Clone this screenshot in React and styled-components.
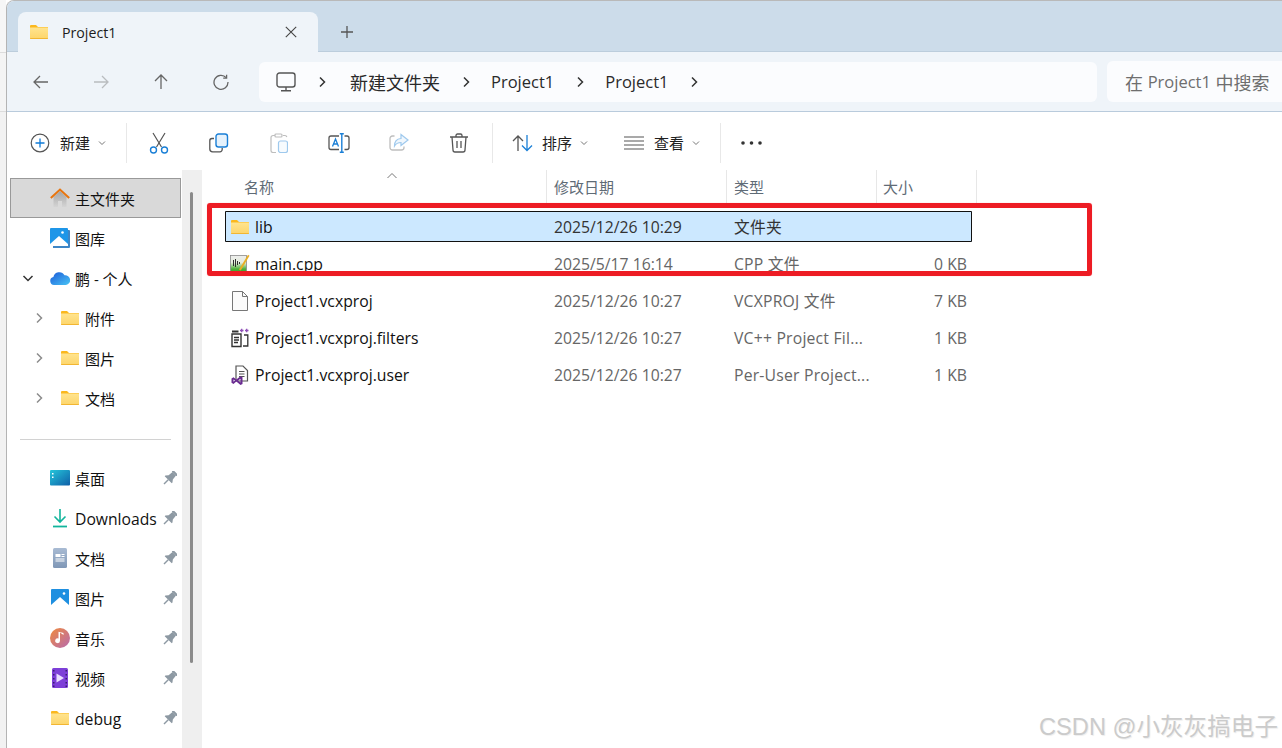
import React, { useId } from 'react';
import styled, { createGlobalStyle } from 'styled-components';

const GlobalStyle = createGlobalStyle`
  html, body {
    margin: 0;
    padding: 0;
    background: #fff;
    overflow: hidden;
  }
  body {
    font-family: "Open Sans", "Noto Sans CJK SC", sans-serif;
    color: #1a1a1a;
  }
`;

const Page = styled.div`
  position: relative;
  display: flex;
  width: 1282px;
  height: 748px;
  overflow: hidden;
  background: #fff;
`;

const BackStrip = styled.div`
  width: 6px;
  flex: none;
  background: linear-gradient(#f6f6f6 0 52px, #dcdcdc 52px 53px, #f4f4f4 53px 111px, #dcdcdc 111px 112px, #f2f2f2 112px);
`;

const Win = styled.div`
  flex: 1;
  min-width: 0;
  display: flex;
  flex-direction: column;
  border-top: 1px solid #b9b9b9;
  border-left: 1px solid #b4b4b4;
  border-top-left-radius: 8px;
  overflow: hidden;
  background: #fff;
`;

const TabStrip = styled.div`
  height: 51px;
  flex: none;
  display: flex;
  align-items: flex-end;
  padding-left: 11px;
  background: #ccdcea;
  box-sizing: border-box;
  border-bottom: 1px solid #bccddc;
`;

const Tab = styled.div`
  width: 300px;
  height: 40px;
  margin-bottom: -1px;
  display: flex;
  align-items: center;
  padding: 0 21px 0 12px;
  box-sizing: border-box;
  background: #eff4f9;
  border-radius: 8px 8px 0 0;
`;

const TabTitle = styled.span`
  flex: 1;
  margin-left: 14px;
  font-size: 14.2px;
  color: #1c1c1c;
`;

const PlusButton = styled.div`
  width: 20px;
  height: 20px;
  margin: 0 0 9px 19px;
  color: #555;
`;

const NavBar = styled.div`
  height: 60px;
  flex: none;
  display: flex;
  align-items: center;
  background: #eff4f9;
  border-bottom: 1px solid #b9cbdc;
  box-sizing: border-box;
`;

const NavButton = styled.div`
  width: 60px;
  height: 40px;
  flex: none;
  display: flex;
  align-items: center;
  justify-content: center;
  color: ${p => (p.$off ? '#b9bcbf' : '#666')};
`;

const NavButtons = styled.div`
  display: flex;
  margin-left: 4px;
  margin-right: 8px;
`;

const AddressBox = styled.div`
  width: 838px;
  height: 40px;
  flex: none;
  display: flex;
  align-items: center;
  padding-left: 17px;
  box-sizing: border-box;
  background: #fbfcfe;
  border-radius: 6px;
  font-size: 18px;
  color: #2a2a2a;
`;

const Crumb = styled.span`
  white-space: nowrap;
  font-size: ${p => (p.$latin ? '16.5px' : '18px')};
`;

const CrumbArrow = styled.span`
  width: 51px;
  flex: none;
  display: flex;
  justify-content: center;
  margin: ${p => (p.$first ? '0 3px 0 0' : '0')};
  color: #333;
`;

const SearchBox = styled.div`
  width: 175px;
  height: 41px;
  flex: none;
  margin-left: 10px;
  display: flex;
  align-items: center;
  padding-left: 18px;
  box-sizing: border-box;
  background: #fbfcfe;
  border-radius: 6px 0 0 6px;
  font-size: 18px;
  color: #6e6e6e;
  white-space: pre;
`;

const SearchTerm = styled.span`
  font-size: 16.5px;
`;

const Toolbar = styled.div`
  height: 58px;
  flex: none;
  display: flex;
  align-items: center;
  padding: 3px 0 0 23px;
  box-sizing: border-box;
  background: #fff;
`;

const ToolLabelButton = styled.div`
  display: flex;
  align-items: center;
  width: ${p => p.$w}px;
  flex: none;
  font-size: 15px;
  color: #1f1f1f;
  white-space: nowrap;
`;

const ToolLabel = styled.span`
  margin: 0 8px 0 ${p => p.$gap}px;
`;

const ToolIcon = styled.div`
  width: 60px;
  flex: none;
  display: flex;
  justify-content: center;
  opacity: ${p => (p.$off ? 0.42 : 1)};
`;

const ToolSep = styled.div`
  width: 1px;
  height: 40px;
  flex: none;
  margin: 0 ${p => p.$right}px 0 ${p => p.$left}px;
  background: #e8e8e8;
`;

const Body = styled.div`
  flex: 1;
  min-height: 0;
  display: flex;
`;

const Side = styled.div`
  width: 175px;
  flex: none;
  padding: 8px 0 0 3px;
  box-sizing: border-box;
  background: #fff;
`;

const SideRow = styled.div`
  height: 40px;
  margin-right: 1px;
  box-sizing: border-box;
  display: flex;
  align-items: center;
  font-size: 15px;
  color: #111;
  white-space: nowrap;
  ${p => p.$active && `
    background: #d9d9d9;
    border: 1px solid #999;
  `}
`;

const SideChevron = styled.div`
  width: ${p => (p.$sub ? 28 : 20)}px;
  margin-left: ${p => (p.$sub ? 23 : 12)}px;
  flex: none;
  color: ${p => (p.$open ? '#333' : '#8c8c8c')};
  display: flex;
`;

const SideIcon = styled.div`
  width: 20px;
  height: 20px;
  flex: none;
  margin: 0 5px 0 ${p => p.$indent}px;
  display: flex;
  align-items: center;
  justify-content: center;
`;

const SideText = styled.span`
  flex: 1;
  font-size: ${p => (p.$latin ? '15.7px' : '15px')};
  padding-top: ${p => (p.$latin ? '2px' : '0')};
`;

const PinSlot = styled.div`
  width: 14px;
  flex: none;
  margin-right: 4px;
  display: flex;
  justify-content: center;
`;

const SideRule = styled.div`
  height: 1px;
  margin: 21px 11px 18px 10px;
  background: #d2d2d2;
`;

const ScrollGutter = styled.div`
  width: 20px;
  flex: none;
  padding: 22px 0 0 8px;
  box-sizing: border-box;
  background: #efefef;
`;

const ScrollThumb = styled.div`
  width: 3px;
  height: 471px;
  border-radius: 2px;
  background: #8a8a8a;
`;

const Main = styled.div`
  flex: 1;
  min-width: 0;
  background: #fff;
  position: relative;
`;

const HeaderRow = styled.div`
  height: 33px;
  display: grid;
  grid-template-columns: 345px 180px 150px 100px;
  box-sizing: border-box;
  font-size: 15px;
  color: #5f6b76;
`;

const HeaderCell = styled.div`
  position: relative;
  display: flex;
  align-items: center;
  padding-left: ${p => p.$pad}px;
  border-right: 1px solid #e7e7e7;
`;

const SortMark = styled.div`
  position: absolute;
  left: 184px;
  top: 0;
  color: #777;
  display: flex;
`;

const FileList = styled.div`
  padding: 8px 0 0 23px;
`;

const FileRow = styled.div`
  width: 747px;
  height: 31px;
  margin-bottom: 6px;
  display: grid;
  grid-template-columns: 320px 180px 150px 97px;
  align-items: center;
  box-sizing: border-box;
  font-size: 15.75px;
  color: #666;
  white-space: nowrap;
  ${p => p.$selected && `
    background: #cce8ff;
    box-shadow: inset 0 0 0 1px #111;
    border-radius: 1px;
    color: #333;
  `}
`;

const NameCell = styled.div`
  display: flex;
  align-items: center;
  color: #111;
  padding-left: 5px;
`;

const FileIcon = styled.div`
  width: 20px;
  height: 20px;
  flex: none;
  margin-right: 5px;
  display: flex;
  align-items: center;
  justify-content: center;
`;

const DateCell = styled.div`
  padding-left: 9px;
`;

const TypeCell = styled.div`
  padding-left: 9px;
  letter-spacing: 0.2px;
`;

const SizeCell = styled.div`
  text-align: right;
  padding-right: 5px;
`;

const RedMark = styled.div`
  position: absolute;
  left: 5px;
  top: 33px;
  width: 885px;
  height: 73px;
  box-sizing: border-box;
  border: 5px solid #ed1c24;
  border-radius: 3px;
  box-shadow: 0 0 1px rgba(237, 28, 36, 0.4);
  pointer-events: none;
`;

const Watermark = styled.div`
  position: absolute;
  right: 4px;
  bottom: 6px;
  font-family: "Liberation Sans", "Noto Sans CJK SC", sans-serif;
  font-size: 23.6px;
  color: #cbcbcb;
  text-shadow: 1px 1px 1px #eeeeee;
  white-space: nowrap;
  pointer-events: none;
`;

function Folder({ size = 18 }) {
  const id = useId();
  const h = Math.round(size * 0.78);
  return (
    <svg width={size} height={h} viewBox="0 0 18 14">
      <defs>
        <linearGradient id={id} x1="0" y1="0" x2="0" y2="1">
          <stop offset="0" stopColor="#ffe48f" />
          <stop offset="1" stopColor="#fdd56a" />
        </linearGradient>
      </defs>
      <path d="M0 1a1 1 0 0 1 1-1h5l2 2h10v3H0z" fill="#fbb81e" />
      <path d="M0 2.500h18V13a1 1 0 0 1-1 1H1a1 1 0 0 1-1-1z" fill={`url(#${id})`} />
      <path d="M0 13h18v.2a.8.8 0 0 1-.8.8H.8a.8.8 0 0 1-.8-.8z" fill="#f2b632" />
    </svg>
  );
}

function Home() {
  const id = useId();
  return (
    <svg width="20" height="20" viewBox="0 0 20 20">
      <defs>
        <linearGradient id={id} x1="0" y1="0" x2="0" y2="1">
          <stop offset="0" stopColor="#a4a4a4" />
          <stop offset="1" stopColor="#d4d4d4" />
        </linearGradient>
      </defs>
      <path d="M3.500 9 10 3l6.500 6v10h-4.500v-6H8v6H3.500z" fill={`url(#${id})`} />
      <path d="M.8 10 10 1.500 19.200 10" fill="none" stroke="#e8750e" strokeWidth="2" />
    </svg>
  );
}

function Gallery() {
  return (
    <svg width="20" height="20" viewBox="0 0 20 20">
      <path d="M3 2h16a1 1 0 0 1 1 1v16a1 1 0 0 1-1 1H3z" fill="#3e86c6" />
      <rect x="0" y="0" width="18" height="18" rx="1" fill="#1e96e8" />
      <path d="M0 16 9 8l9 8v2H0z" fill="#fff" />
      <circle cx="12.500" cy="4.500" r="1.300" fill="#fff" />
    </svg>
  );
}

function Cloud() {
  const id = useId();
  return (
    <svg width="20" height="14" viewBox="0 0 20 14">
      <defs>
        <linearGradient id={id} x1="0" y1="0" x2="1" y2="1">
          <stop offset="0" stopColor="#1b59d8" />
          <stop offset="1" stopColor="#49c5f5" />
        </linearGradient>
      </defs>
      <path d="M4 14a4 4 0 0 1-.6-7.900A6 6 0 0 1 14.500 4.300 4.900 4.900 0 0 1 16 14z" fill={`url(#${id})`} />
    </svg>
  );
}

function Desktop() {
  const id = useId();
  return (
    <svg width="20" height="16" viewBox="0 0 20 16">
      <defs>
        <linearGradient id={id} x1="0" y1="0" x2="1" y2="1">
          <stop offset="0" stopColor="#25c6da" />
          <stop offset="1" stopColor="#0f5fa8" />
        </linearGradient>
      </defs>
      <rect width="20" height="15.500" rx="1" fill={`url(#${id})`} />
      <path d="M2 3h1.500v1.500H2zM2 6.500h1.500V8H2z" fill="#fff" />
    </svg>
  );
}

function DownloadArrow() {
  return (
    <svg width="16" height="20" viewBox="0 0 16 20" fill="none" stroke="#12b59c" strokeWidth="1.600">
      <path d="M8 1v13M2.500 8.500 8 14l5.500-5.500" />
      <path d="M1 18.500h14" strokeWidth="1.800" />
    </svg>
  );
}

function DocIcon() {
  const id = useId();
  return (
    <svg width="14" height="20" viewBox="0 0 14 20">
      <defs>
        <linearGradient id={id} x1="0" y1="0" x2="0" y2="1">
          <stop offset="0" stopColor="#a9bbd3" />
          <stop offset="1" stopColor="#7f97b6" />
        </linearGradient>
      </defs>
      <rect width="14" height="20" rx="1.500" fill={`url(#${id})`} />
      <path d="M2.500 6h5v3h-5zM8.500 6h3v1h-3zM8.500 8h3v1h-3zM2.500 10.500h9v1h-9zM2.500 12.500h9v1h-9z" fill="#fff" />
    </svg>
  );
}

function PictureIcon() {
  return (
    <svg width="18" height="18" viewBox="0 0 18 18">
      <rect width="18" height="18" rx="1" fill="#1e8fe0" />
      <path d="M0 16 9 8l9 8v2H0z" fill="#fff" />
      <circle cx="13" cy="4.500" r="1.300" fill="#fff" />
    </svg>
  );
}

function MusicIcon() {
  const id = useId();
  return (
    <svg width="20" height="20" viewBox="0 0 20 20">
      <defs>
        <linearGradient id={id} x1="0" y1="0" x2="1" y2="1">
          <stop offset="0" stopColor="#f08a3c" />
          <stop offset="1" stopColor="#b76bb0" />
        </linearGradient>
      </defs>
      <circle cx="10" cy="10" r="10" fill={`url(#${id})`} />
      <path d="M10 4.500v8.200a2.400 2.400 0 1 1-1.500-2.200V3.800l5 1.200v2z" fill="#fff" />
    </svg>
  );
}

function VideoIcon() {
  return (
    <svg width="16" height="20" viewBox="0 0 16 20">
      <rect width="16" height="20" rx="1.500" fill="#7d3fd8" />
      <path d="M1 2h1.500v1.500H1zM1 6h1.500v1.500H1zM1 10h1.500v1.500H1zM1 14h1.500v1.500H1zM1 17.500h1.500V19H1zM13.500 2H15v1.500h-1.500zM13.500 6H15v1.500h-1.500zM13.500 10H15v1.500h-1.500zM13.500 14H15v1.500h-1.500zM13.500 17.500H15V19h-1.500z" fill="#3a1c70" />
      <path d="M4.500 5.500 12 10l-7.500 4.500z" fill="#e9ddff" />
    </svg>
  );
}

function Pin() {
  return (
    <svg width="14" height="14" viewBox="0 0 14 14" fill="#8d99a3">
      <g transform="rotate(45 7 7)">
        <rect x="3.400" y="-1" width="7.200" height="2" rx=".6" />
        <path d="M4.500 1h5l.5 5 2 2.500v1H2v-1L4 6z" />
        <rect x="6.300" y="9.500" width="1.400" height="6" />
      </g>
    </svg>
  );
}

function Chevron({ dir = 'right', size = 12, width = 1.500 }) {
  const d = {
    right: 'M4 1.500 8.500 6 4 10.500',
    down: 'M1.500 4 6 8.500 10.500 4',
    up: 'M1.500 8 6 3.500 10.500 8',
  }[dir];
  return (
    <svg width={size} height={size} viewBox="0 0 12 12" fill="none" stroke="currentColor" strokeWidth={width}>
      <path d={d} />
    </svg>
  );
}

function SmallCaret() {
  return (
    <svg width="8" height="8" viewBox="0 0 8 8" fill="none" stroke="#777" strokeWidth="1">
      <path d="M1 2.500 4 5.500 7 2.500" />
    </svg>
  );
}

function ArrowIcon({ dir }) {
  const rot = { left: 180, right: 0, up: -90 }[dir];
  return (
    <svg width="16" height="16" viewBox="0 0 16 16" fill="none" stroke="currentColor" strokeWidth="1.300" style={{ transform: `rotate(${rot}deg)` }}>
      <path d="M1 8h14M9 2l6 6-6 6" />
    </svg>
  );
}

function RefreshIcon() {
  return (
    <svg width="16" height="16" viewBox="0 0 16 16" fill="none" stroke="currentColor" strokeWidth="1.300">
      <path d="M13.200 3.600A7 7 0 1 0 15 8" />
      <path d="M13.600.8v3.400h-3.400" />
    </svg>
  );
}

function Monitor() {
  return (
    <svg width="20" height="20" viewBox="0 0 20 20" fill="none" stroke="#555" strokeWidth="1.400">
      <rect x="1" y="1" width="18" height="14" rx="2.500" />
      <path d="M10 15v3M5 18.800h10" />
    </svg>
  );
}

function PlusCircle() {
  return (
    <svg width="20" height="20" viewBox="0 0 20 20" fill="none">
      <circle cx="10" cy="10" r="8.800" stroke="#555" strokeWidth="1.200" />
      <path d="M10 5.500v9M5.500 10h9" stroke="#0f7bd8" strokeWidth="1.300" />
    </svg>
  );
}

function Scissors() {
  return (
    <svg width="20" height="22" viewBox="0 0 20 22" fill="none">
      <path d="M4 1l8.500 14M16 1 7.500 15" stroke="#555" strokeWidth="1.200" />
      <circle cx="4.500" cy="18" r="3" stroke="#1a7fd6" strokeWidth="1.400" />
      <circle cx="15.500" cy="18" r="3" stroke="#1a7fd6" strokeWidth="1.400" />
    </svg>
  );
}

function CopyIcon() {
  return (
    <svg width="20" height="20" viewBox="0 0 20 20" fill="none">
      <path d="M5 5.500H3a2.200 2.200 0 0 0-2.200 2.200V16A2.800 2.800 0 0 0 3.600 18.800H11a2.200 2.200 0 0 0 2.200-2.200V15" stroke="#555" strokeWidth="1.300" />
      <rect x="7" y="1" width="11.500" height="13" rx="2.500" stroke="#1a7fd6" strokeWidth="1.400" fill="#e6f2fc" />
    </svg>
  );
}

function PasteIcon() {
  return (
    <svg width="18" height="20" viewBox="0 0 18 20" fill="none">
      <path d="M5 2.500H3A2 2 0 0 0 1 4.500v13a2 2 0 0 0 2 2h3M13 2.500h2a2 2 0 0 1 1.800 1.500" stroke="#666" strokeWidth="1.200" />
      <rect x="5" y="1" width="7" height="3" rx="1" stroke="#666" strokeWidth="1.200" />
      <rect x="8.500" y="8" width="9" height="11.500" rx="2" stroke="#1a7fd6" strokeWidth="1.200" fill="#eef6fd" />
    </svg>
  );
}

function RenameIcon() {
  return (
    <svg width="22" height="20" viewBox="0 0 22 20" fill="none">
      <path d="M11 3H3a2 2 0 0 0-2 2v9.500a2 2 0 0 0 2 2h8M16.500 3H19a2 2 0 0 1 2 2v9.500a2 2 0 0 1-2 2h-2.500" stroke="#555" strokeWidth="1.300" />
      <path d="M13.800 .8v18.400M11.800 .8h4M11.800 19.200h4" stroke="#1a7fd6" strokeWidth="1.400" />
      <path d="M4.500 13.500 7.500 6 10.500 13.500M5.500 11h4" stroke="#1a7fd6" strokeWidth="1.300" />
    </svg>
  );
}

function ShareIcon() {
  return (
    <svg width="20" height="20" viewBox="0 0 20 20" fill="none">
      <path d="M5.500 3H3.500A2.500 2.500 0 0 0 1 5.500v9A2.500 2.500 0 0 0 3.500 17h9a2.500 2.500 0 0 0 2.500-2.500v-1" stroke="#666" strokeWidth="1.300" />
      <path d="M12 1.500 19 7l-7 5.500V9.500c-3 0-5 1-6.500 3.500 0-4.500 2.500-7.200 6.500-7.500z" stroke="#1a7fd6" strokeWidth="1.200" fill="#dcedfb" />
    </svg>
  );
}

function TrashIcon() {
  return (
    <svg width="18" height="20" viewBox="0 0 18 20" fill="none" stroke="#555" strokeWidth="1.300">
      <path d="M0 4h18M6 4V2.500A1.500 1.500 0 0 1 7.500 1h3A1.500 1.500 0 0 1 12 2.500V4" />
      <path d="M2 4l1 13a2 2 0 0 0 2 2h8a2 2 0 0 0 2-2l1-13" />
      <path d="M7 8v7M11 8v7" />
    </svg>
  );
}

function SortIcon() {
  return (
    <svg width="22" height="18" viewBox="0 0 22 18" fill="none" strokeWidth="1.300">
      <path d="M6 17V2M1 7l5-5 5 5" stroke="#555" />
      <path d="M15 1v15.500M10 11.500l5 5 5-5" stroke="#1a7fd6" />
    </svg>
  );
}

function ViewIcon() {
  return (
    <svg width="20" height="14" viewBox="0 0 20 14" stroke="#555" strokeWidth="1.200">
      <path d="M0 1h20M0 5h20M0 9h20M0 13h20" />
    </svg>
  );
}

function DotsIcon() {
  return (
    <svg width="21" height="6" viewBox="0 0 21 6" fill="#333">
      <circle cx="2" cy="3" r="1.800" />
      <circle cx="10.500" cy="3" r="1.800" />
      <circle cx="19" cy="3" r="1.800" />
    </svg>
  );
}

function CppIcon() {
  const id = useId();
  return (
    <svg width="20" height="20" viewBox="0 0 20 20">
      <defs>
        <linearGradient id={id} x1="0" y1="0" x2="0" y2="1">
          <stop offset="0" stopColor="#eeeeee" />
          <stop offset="0.400" stopColor="#e4ecdc" />
          <stop offset="0.750" stopColor="#4fb03a" />
          <stop offset="1" stopColor="#2f9d22" />
        </linearGradient>
      </defs>
      <rect x=".5" y="1.500" width="16" height="18" fill={`url(#${id})`} stroke="#8b8b8b" strokeWidth=".8" />
      <path d="M3.500 6v6M5.500 5v8M7.500 7v4M9.500 8v2" stroke="#2e2e2e" strokeWidth="1" />
      <path d="M9 15.500 18 .8l1.500 1-8.700 14.700z" fill="#e8ae24" />
    </svg>
  );
}

function BlankFile() {
  return (
    <svg width="16" height="20" viewBox="0 0 16 20" fill="#fbfbfb" stroke="#777" strokeWidth="1">
      <path d="M.5.500h10l5 5v14H.5z" />
      <path d="M10.500.500v5h5" fill="none" />
    </svg>
  );
}

function FiltersFile() {
  return (
    <svg width="18" height="20" viewBox="0 0 18 20" fill="none">
      <path d="M1 6h9v12.500H1z" fill="#fff" stroke="#333" strokeWidth="1.400" />
      <path d="M3 9.500h5M3 12h5M3 14.500h4" stroke="#333" strokeWidth="1.300" />
      <path d="M1 3.500h6.500" stroke="#333" strokeWidth="2" />
      <path d="M13 7h3.800v11H12" stroke="#333" strokeWidth="1.300" />
      <path d="M9 2.500h3.500M10.700 .8v3.500M14 2.500h3.500M15.700 .8v3.500" stroke="#8e4fb8" strokeWidth="1.300" />
    </svg>
  );
}

function VsUserFile() {
  return (
    <svg width="18" height="20" viewBox="0 0 18 20" fill="none">
      <path d="M5 1h7l4.500 4.500V16H5z" fill="#fff" stroke="#555" strokeWidth="1.200" />
      <path d="M8 6.500h5.500M8 9h5.500M8 11.500h5.500" stroke="#555" strokeWidth="1.100" />
      <path d="M0.500 13.500 2.500 12.300 5.300 14.600 9.500 11.200 11.500 12.200V19L9.500 20 5.300 16.600 2.500 19 .5 17.800zM2.500 14.400v2.400L4 15.600zM9.500 13.800 7 15.600l2.500 2z" fill="#6a2c91" fillRule="evenodd" />
    </svg>
  );
}

const libraryPlaces = [
  { name: '附件' },
  { name: '图片' },
  { name: '文档' },
];

const pinned = [
  { name: '桌面', icon: <Desktop /> },
  { name: 'Downloads', icon: <DownloadArrow />, latin: true },
  { name: '文档', icon: <DocIcon /> },
  { name: '图片', icon: <PictureIcon /> },
  { name: '音乐', icon: <MusicIcon /> },
  { name: '视频', icon: <VideoIcon /> },
  { name: 'debug', icon: <Folder />, latin: true },
];

const files = [
  { name: 'lib', date: '2025/12/26 10:29', type: '文件夹', size: '', icon: <Folder />, selected: true },
  { name: 'main.cpp', date: '2025/5/17 16:14', type: 'CPP 文件', size: '0 KB', icon: <CppIcon /> },
  { name: 'Project1.vcxproj', date: '2025/12/26 10:27', type: 'VCXPROJ 文件', size: '7 KB', icon: <BlankFile /> },
  { name: 'Project1.vcxproj.filters', date: '2025/12/26 10:27', type: 'VC++ Project Fil...', size: '1 KB', icon: <FiltersFile /> },
  { name: 'Project1.vcxproj.user', date: '2025/12/26 10:27', type: 'Per-User Project...', size: '1 KB', icon: <VsUserFile /> },
];

export default function App() {
  return (
    <Page>
      <GlobalStyle />
      <BackStrip />
      <Win>
        <TabStrip>
          <Tab>
            <Folder />
            <TabTitle>Project1</TabTitle>
            <svg width="12" height="12" viewBox="0 0 12 12" fill="none" stroke="#444" strokeWidth="1.100">
              <path d="M.8.800l10.400 10.400M11.200.800.800 11.200" />
            </svg>
          </Tab>
          <PlusButton>
            <svg width="20" height="20" viewBox="0 0 20 20" fill="none" stroke="currentColor" strokeWidth="1.300">
              <path d="M10 4v12M4 10h12" />
            </svg>
          </PlusButton>
        </TabStrip>

        <NavBar>
          <NavButtons>
            <NavButton><ArrowIcon dir="left" /></NavButton>
            <NavButton $off><ArrowIcon dir="right" /></NavButton>
            <NavButton><ArrowIcon dir="up" /></NavButton>
            <NavButton><RefreshIcon /></NavButton>
          </NavButtons>
          <AddressBox>
            <Monitor />
            <CrumbArrow $first><Chevron /></CrumbArrow>
            <Crumb>新建文件夹</Crumb>
            <CrumbArrow><Chevron /></CrumbArrow>
            <Crumb $latin>Project1</Crumb>
            <CrumbArrow><Chevron /></CrumbArrow>
            <Crumb $latin>Project1</Crumb>
            <CrumbArrow><Chevron /></CrumbArrow>
          </AddressBox>
          <SearchBox>在 <SearchTerm>Project1</SearchTerm> 中搜索</SearchBox>
        </NavBar>

        <Toolbar>
          <ToolLabelButton $w={94}>
            <PlusCircle />
            <ToolLabel $gap={10}>新建</ToolLabel>
            <SmallCaret />
          </ToolLabelButton>
          <ToolSep $left={2} $right={2} />
          <ToolIcon><Scissors /></ToolIcon>
          <ToolIcon><CopyIcon /></ToolIcon>
          <ToolIcon $off><PasteIcon /></ToolIcon>
          <ToolIcon><RenameIcon /></ToolIcon>
          <ToolIcon $off><ShareIcon /></ToolIcon>
          <ToolIcon><TrashIcon /></ToolIcon>
          <ToolSep $left={3} $right={19} />
          <ToolLabelButton $w={112}>
            <SortIcon />
            <ToolLabel $gap={8}>排序</ToolLabel>
            <SmallCaret />
          </ToolLabelButton>
          <ToolLabelButton $w={96}>
            <ViewIcon />
            <ToolLabel $gap={10}>查看</ToolLabel>
            <SmallCaret />
          </ToolLabelButton>
          <ToolSep $left={0} $right={20} />
          <DotsIcon />
        </Toolbar>

        <Body>
          <Side>
            <SideRow $active>
              <SideIcon $indent={39}><Home /></SideIcon>
              <SideText>主文件夹</SideText>
            </SideRow>
            <SideRow>
              <SideIcon $indent={40}><Gallery /></SideIcon>
              <SideText>图库</SideText>
            </SideRow>
            <SideRow>
              <SideChevron $open><Chevron dir="down" /></SideChevron>
              <SideIcon $indent={8}><Cloud /></SideIcon>
              <SideText>鹏 - 个人</SideText>
            </SideRow>
            {libraryPlaces.map(item => (
              <SideRow key={item.name}>
                <SideChevron $sub><Chevron /></SideChevron>
                <SideIcon $indent={-1}><Folder /></SideIcon>
                <SideText>{item.name}</SideText>
              </SideRow>
            ))}
            <SideRule />
            {pinned.map(item => (
              <SideRow key={item.name}>
                <SideIcon $indent={40}>{item.icon}</SideIcon>
                <SideText $latin={item.latin}>{item.name}</SideText>
                <PinSlot><Pin /></PinSlot>
              </SideRow>
            ))}
          </Side>
          <ScrollGutter><ScrollThumb /></ScrollGutter>
          <Main>
            <HeaderRow>
              <HeaderCell $pad={42}>
                名称
                <SortMark><Chevron dir="up" size={12} width={1} /></SortMark>
              </HeaderCell>
              <HeaderCell $pad={7}>修改日期</HeaderCell>
              <HeaderCell $pad={7}>类型</HeaderCell>
              <HeaderCell $pad={6}>大小</HeaderCell>
            </HeaderRow>
            <FileList>
              {files.map(f => (
                <FileRow key={f.name} $selected={f.selected}>
                  <NameCell>
                    <FileIcon>{f.icon}</FileIcon>
                    {f.name}
                  </NameCell>
                  <DateCell>{f.date}</DateCell>
                  <TypeCell>{f.type}</TypeCell>
                  <SizeCell>{f.size}</SizeCell>
                </FileRow>
              ))}
            </FileList>
            <RedMark />
          </Main>
        </Body>
      </Win>
      <Watermark>CSDN @小灰灰搞电子</Watermark>
    </Page>
  );
}
